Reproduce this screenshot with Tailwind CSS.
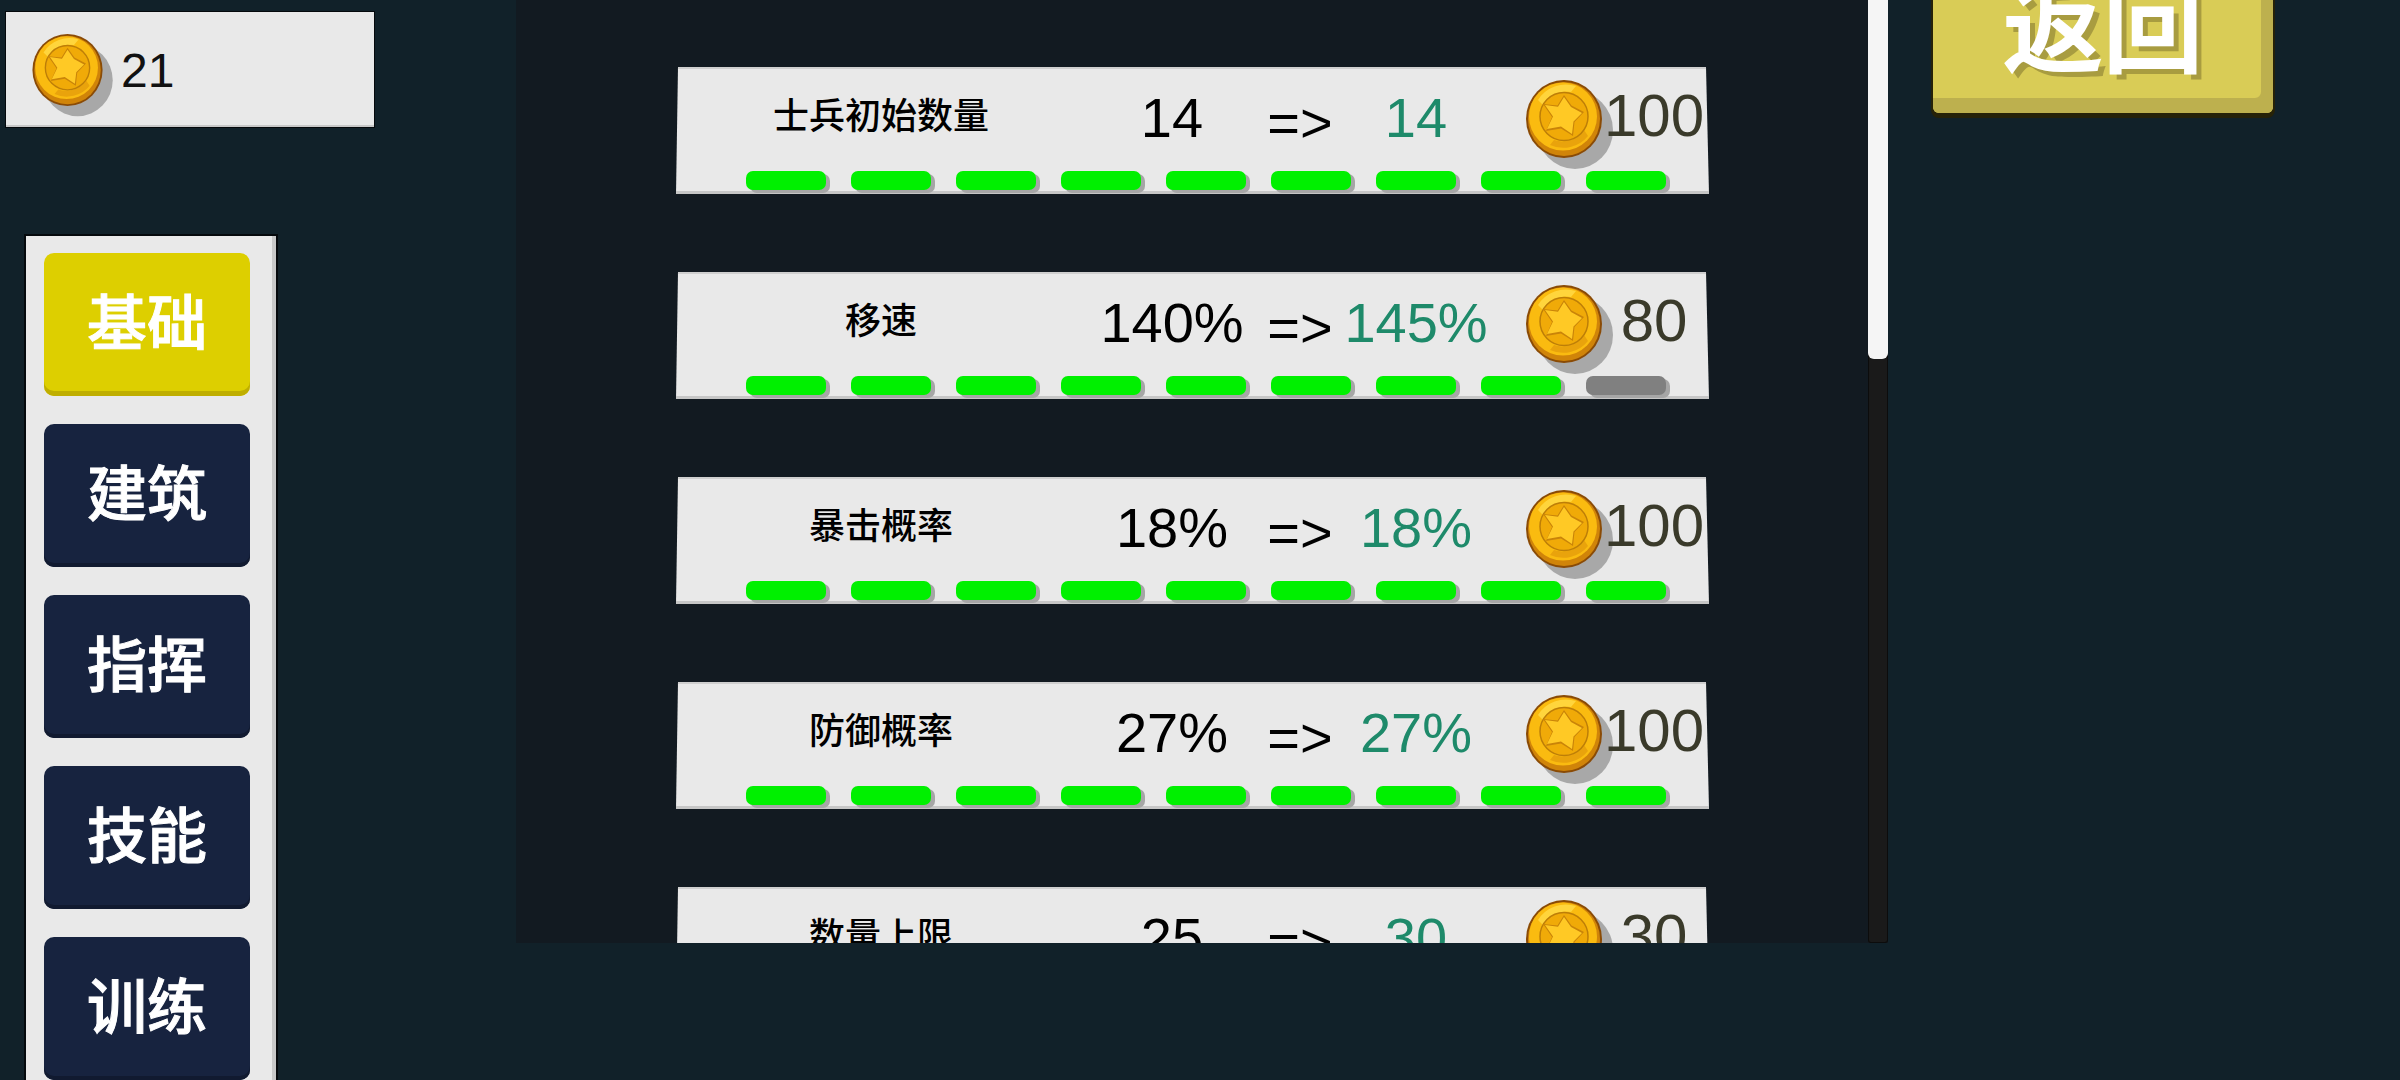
<!DOCTYPE html>
<html lang="zh-CN">
<head>
  <meta charset="UTF-8" />
  <title>升级</title>
  <script src="https://cdn.jsdelivr.net/npm/@tailwindcss/browser@4"></script>
</head>
<body class="bg-[#112129] font-['Liberation_Sans','Noto_Sans_CJK_SC',sans-serif]">

  <!-- coin used everywhere -->
  <svg class="hidden">
    <symbol id="coin" viewBox="0 0 76 78" overflow="visible">
      <ellipse cx="49" cy="50" rx="38" ry="39" fill="#000" fill-opacity="0.28" />
      <ellipse cx="38" cy="39" rx="38" ry="39" fill="#8a4b06" />
      <ellipse cx="38" cy="39" rx="36" ry="37" fill="#d08409" />
      <ellipse cx="37" cy="36.500" rx="34" ry="34" fill="#fabb10" />
      <path d="M12 20 A33 33 0 0 1 50 6 L45 12 A27 27 0 0 0 17 25 Z" fill="#ffd53c" />
      <path d="M62 56 A32 32 0 0 1 24 65 L28 60 A26 26 0 0 0 58 50 Z" fill="#e9a30c" />
      <circle cx="38" cy="36.500" r="24" fill="#f0aa08" stroke="#bd7e08" stroke-width="1.500" />
      <path d="M38 15 L45.500 25.500 L58 32 L48.500 42 L47 56 L35 48.500 L20 51 L26 37 L17 24 L31.500 25.500 Z" fill="#c98409" />
      <path d="M38 17 L45 27 L56 33 L47.500 41.500 L46 54 L35 46.600 L21 49 L27 36.600 L19 25 L32 26.700 Z" fill="#ffc925" />
    </symbol>
  </svg>

  <div class="h-screen overflow-hidden flex">

    <!-- LEFT: money + tabs -->
    <div class="w-[516px] shrink-0 flex flex-col">
      <div class="w-[368px] h-[115px] mt-[12px] ml-[6px] bg-[#e9e9e9] flex items-center pl-[26px] shadow-[inset_0_-2px_0_#c8c8c8,0_0_0_1px_#05090c]">
        <svg class="w-[71px] h-[72px] overflow-visible"><use href="#coin" /></svg>
        <span class="ml-[18px] mt-[2px] text-[48px] leading-none text-[#111]">21</span>
      </div>

      <div class="w-[250px] mt-[109px] ml-[26px] pt-[17px] pl-[18px] bg-[#e9e9e9] flex flex-col gap-[28px] shadow-[inset_-4px_0_0_#c8c8c8,0_0_0_2px_#05090c]">
        <div class="w-[206px] h-[143px] shrink-0 rounded-[10px] bg-[#ddcf00] shadow-[inset_0_-5px_0_#bfae00] flex items-center justify-center text-white text-[60px] font-medium [-webkit-text-stroke:1px_white]">基础</div>
        <div class="w-[206px] h-[143px] shrink-0 rounded-[10px] bg-[#17233f] shadow-[inset_0_-4px_0_#111a30] flex items-center justify-center text-white text-[60px] font-medium [-webkit-text-stroke:1px_white]">建筑</div>
        <div class="w-[206px] h-[143px] shrink-0 rounded-[10px] bg-[#17233f] shadow-[inset_0_-4px_0_#111a30] flex items-center justify-center text-white text-[60px] font-medium [-webkit-text-stroke:1px_white]">指挥</div>
        <div class="w-[206px] h-[143px] shrink-0 rounded-[10px] bg-[#17233f] shadow-[inset_0_-4px_0_#111a30] flex items-center justify-center text-white text-[60px] font-medium [-webkit-text-stroke:1px_white]">技能</div>
        <div class="w-[206px] h-[143px] shrink-0 rounded-[10px] bg-[#17233f] shadow-[inset_0_-4px_0_#111a30] flex items-center justify-center text-white text-[60px] font-medium [-webkit-text-stroke:1px_white]">训练</div>
      </div>
    </div>

    <!-- CENTER: upgrade list -->
    <div class="relative w-[1372px] shrink-0 h-[943px] bg-[#121a21] overflow-hidden">
      <div id="lista" class="pt-[67px] pl-[160px] flex flex-col gap-[78px]"></div>
      <div class="absolute top-0 right-0 w-[20px] h-full bg-[#1a1a1a] rounded-b-[3px] shadow-[inset_0_0_0_1px_#0c0c0c]">
        <div class="w-full h-[359px] bg-[#f5f5f5] rounded-b-[6px]"></div>
      </div>
    </div>

    <!-- RIGHT: back button -->
    <div class="flex-1 pl-[45px]">
      <div class="w-[340px] h-[167px] -mt-[54px] bg-[#d9cc56] rounded-b-[6px] flex items-center justify-center text-white text-[100px] font-medium [-webkit-text-stroke:2px_white] [text-shadow:6px_6px_0_#a89c40] shadow-[inset_-12px_-15px_0_#bdb04e,0_3px_0_2px_#262208]">返回</div>
    </div>
  </div>

  <script>
    const itens = [
      { nome: '士兵初始数量', atual: '14', prox: '14', custo: '100', nivel: 9 },
      { nome: '移速', atual: '140%', prox: '145%', custo: '80', nivel: 8 },
      { nome: '暴击概率', atual: '18%', prox: '18%', custo: '100', nivel: 9 },
      { nome: '防御概率', atual: '27%', prox: '27%', custo: '100', nivel: 9 },
      { nome: '数量上限', atual: '25', prox: '30', custo: '30', nivel: 9 }
    ];

    function pips(nivel) {
      let html = '';
      for (let i = 0; i < 9; i++) {
        html += i < nivel
          ? '<div class="w-[80px] h-[19px] rounded-[7px] bg-[#00f000] shadow-[4px_3px_0_#a6a6a6]"></div>'
          : '<div class="w-[80px] h-[19px] rounded-[7px] bg-[#808080] shadow-[4px_3px_0_#a6a6a6]"></div>';
      }
      return html;
    }

    document.getElementById('lista').innerHTML = itens.map(item => `
      <div class="w-[1033px] h-[127px] shrink-0 bg-[#e9e9e9] shadow-[inset_0_-3px_0_#c6c6c6,inset_0_2px_0_#cfcfcf] [clip-path:polygon(2px_0,1030px_0,100%_100%,0_100%)]">
        <div class="h-[104px] flex items-center text-[56px] leading-none text-black">
          <div class="w-[410px] text-center text-[36px] font-medium -mt-[4px]">${item.nome}</div>
          <div class="w-[172px] text-center -mt-[2px]">${item.atual}</div>
          <div class="w-[84px] text-center pt-[8px]">=&gt;</div>
          <div class="w-[148px] text-center text-[#1e8a6a] -mt-[2px]">${item.prox}</div>
          <svg class="ml-[36px] w-[76px] h-[78px] -mt-[1px] overflow-visible"><use href="#coin" /></svg>
          <div class="w-[104px] text-center text-[60px] text-[#3a3a2a] -mt-[6px]">${item.custo}</div>
        </div>
        <div class="pl-[70px] flex gap-[25px]">${pips(item.nivel)}</div>
      </div>
    `).join('');
  </script>

</body>
</html>
